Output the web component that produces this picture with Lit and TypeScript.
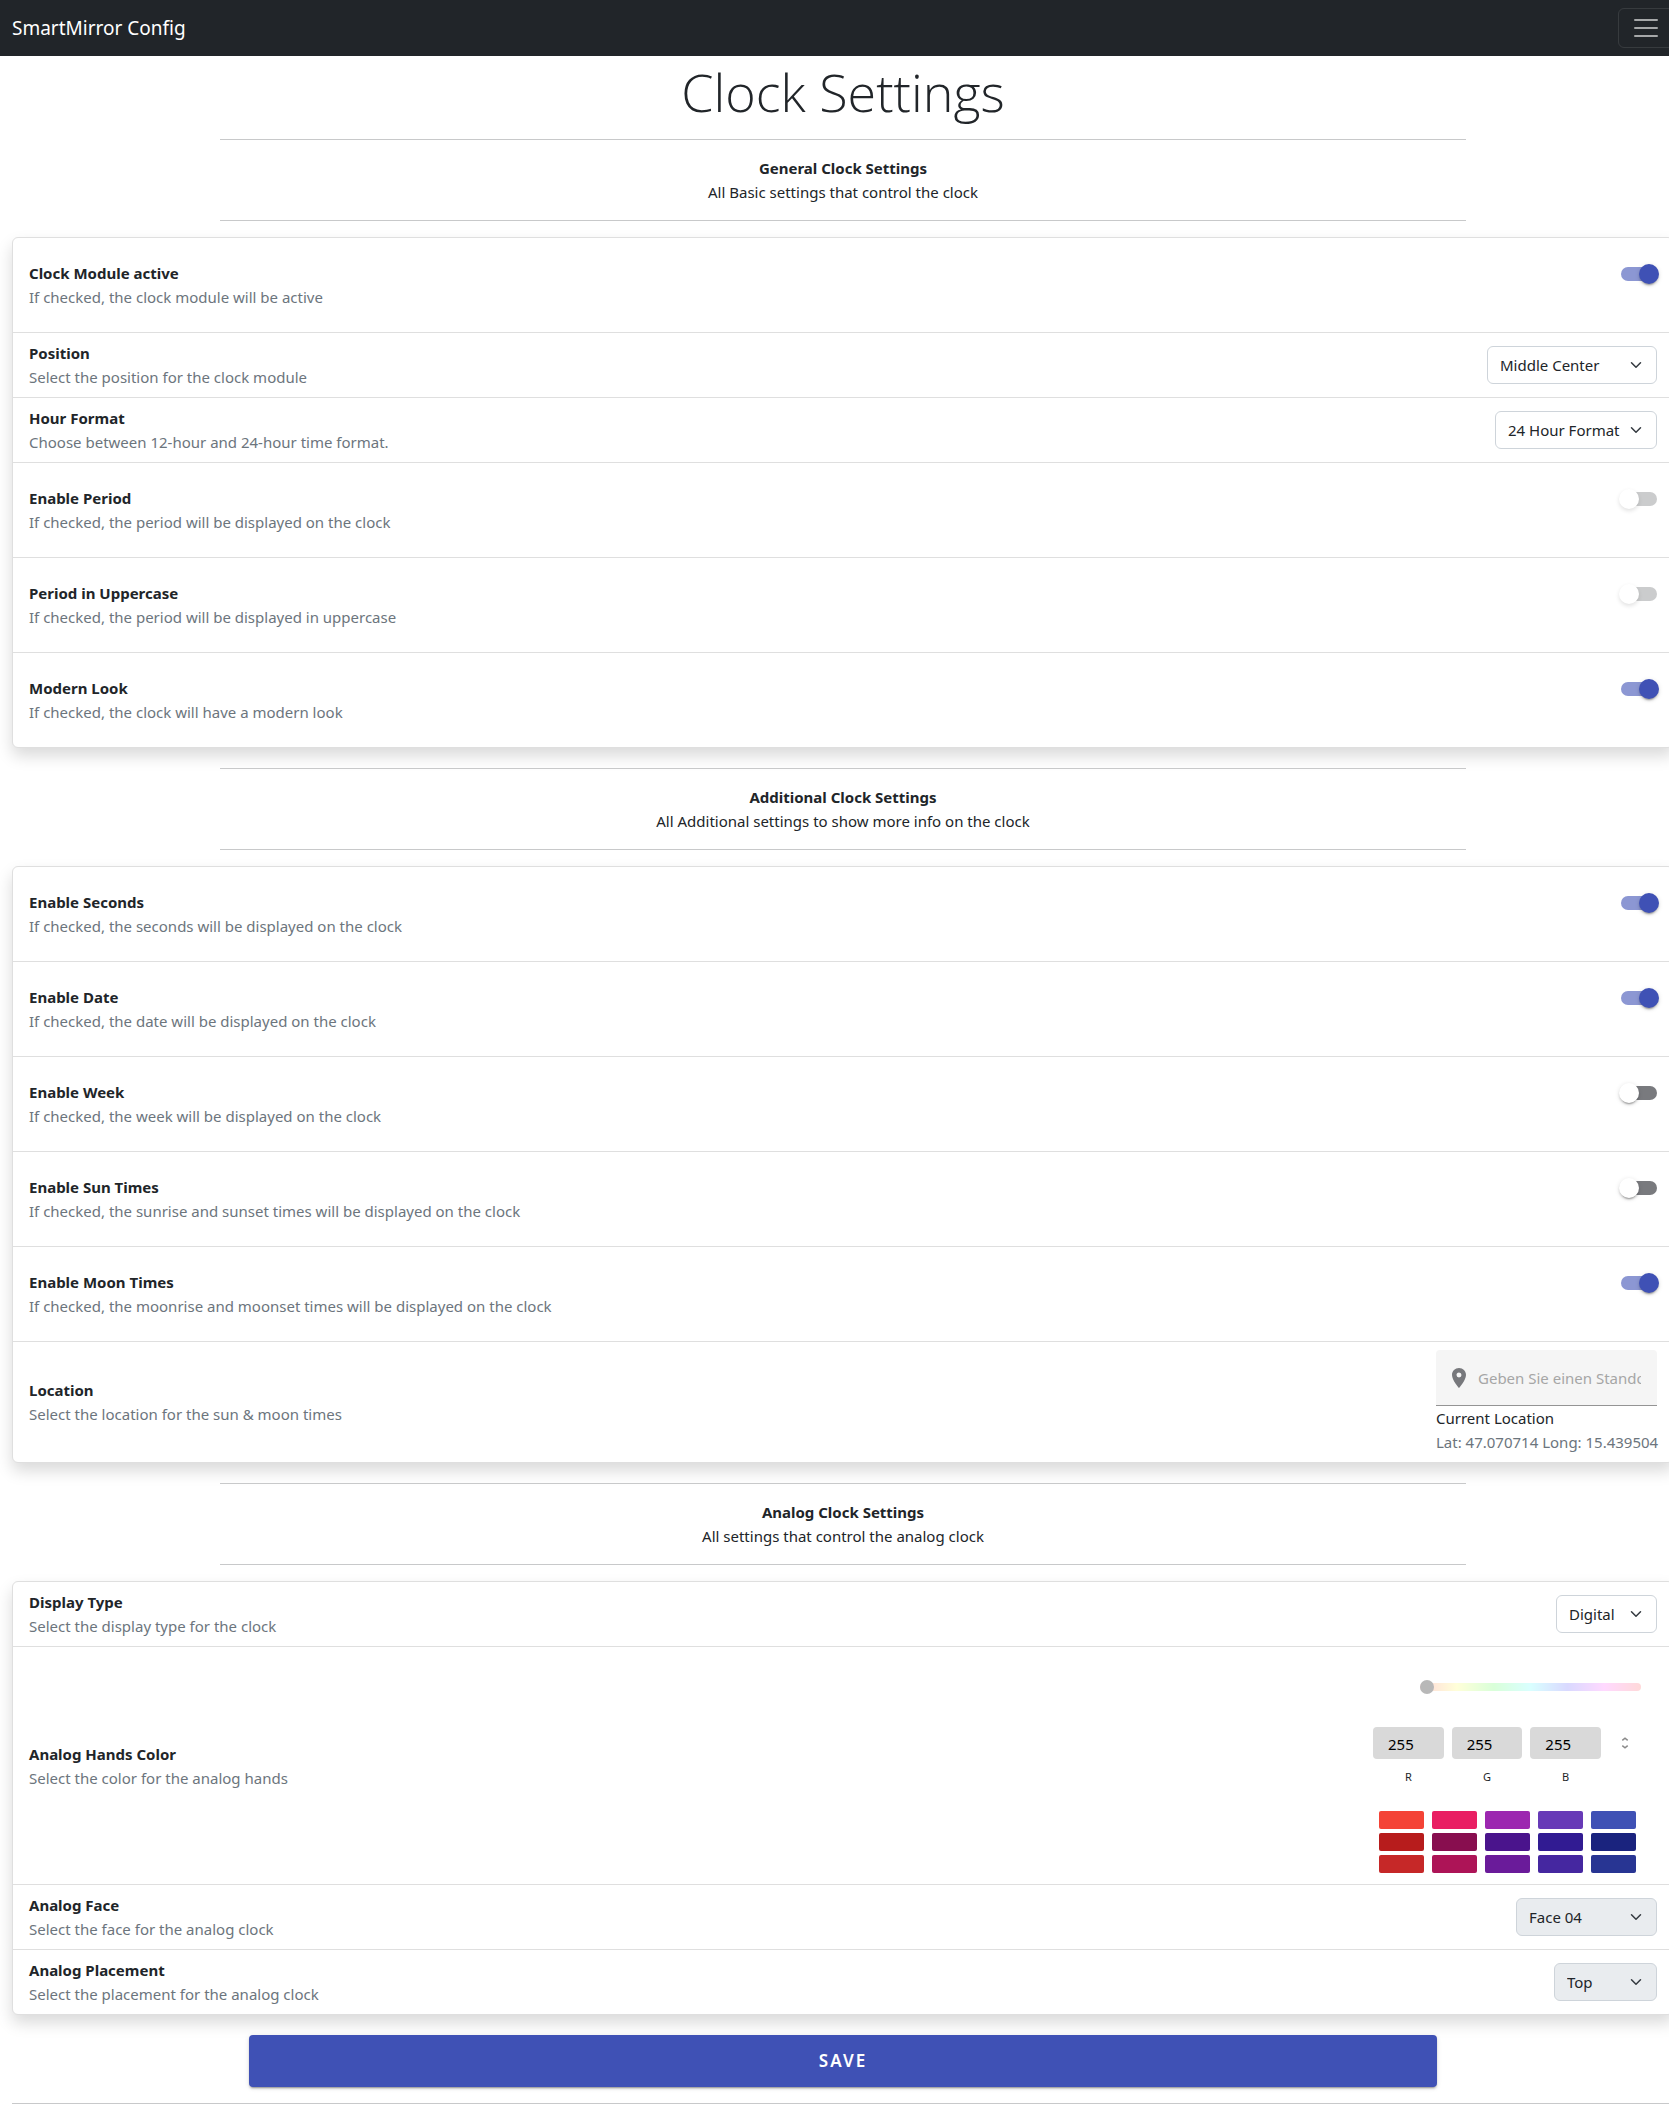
import { LitElement, html, css, nothing } from "lit";
import { customElement } from "lit/decorators.js";
import { styleMap } from "lit/directives/style-map.js";

type Control =
  | { kind: "switch"; on: boolean; disabled?: boolean }
  | { kind: "select"; options: string[]; width: number; disabled?: boolean }
  | { kind: "location" }
  | { kind: "color" };

interface Setting {
  id: string;
  title: string;
  hint: string;
  control: Control;
}

interface Section {
  title: string;
  hint: string;
  settings: Setting[];
}

const SECTIONS: Section[] = [
  {
    title: "General Clock Settings",
    hint: "All Basic settings that control the clock",
    settings: [
      { id: "active", title: "Clock Module active", hint: "If checked, the clock module will be active", control: { kind: "switch", on: true } },
      { id: "position", title: "Position", hint: "Select the position for the clock module", control: { kind: "select", options: ["Middle Center"], width: 170 } },
      { id: "hour-format", title: "Hour Format", hint: "Choose between 12-hour and 24-hour time format.", control: { kind: "select", options: ["24 Hour Format"], width: 162 } },
      { id: "period", title: "Enable Period", hint: "If checked, the period will be displayed on the clock", control: { kind: "switch", on: false, disabled: true } },
      { id: "uppercase", title: "Period in Uppercase", hint: "If checked, the period will be displayed in uppercase", control: { kind: "switch", on: false, disabled: true } },
      { id: "modern", title: "Modern Look", hint: "If checked, the clock will have a modern look", control: { kind: "switch", on: true } },
    ],
  },
  {
    title: "Additional Clock Settings",
    hint: "All Additional settings to show more info on the clock",
    settings: [
      { id: "seconds", title: "Enable Seconds", hint: "If checked, the seconds will be displayed on the clock", control: { kind: "switch", on: true } },
      { id: "date", title: "Enable Date", hint: "If checked, the date will be displayed on the clock", control: { kind: "switch", on: true } },
      { id: "week", title: "Enable Week", hint: "If checked, the week will be displayed on the clock", control: { kind: "switch", on: false } },
      { id: "sun", title: "Enable Sun Times", hint: "If checked, the sunrise and sunset times will be displayed on the clock", control: { kind: "switch", on: false } },
      { id: "moon", title: "Enable Moon Times", hint: "If checked, the moonrise and moonset times will be displayed on the clock", control: { kind: "switch", on: true } },
      { id: "location", title: "Location", hint: "Select the location for the sun & moon times", control: { kind: "location" } },
    ],
  },
  {
    title: "Analog Clock Settings",
    hint: "All settings that control the analog clock",
    settings: [
      { id: "display", title: "Display Type", hint: "Select the display type for the clock", control: { kind: "select", options: ["Digital"], width: 101 } },
      { id: "hands", title: "Analog Hands Color", hint: "Select the color for the analog hands", control: { kind: "color" } },
      { id: "face", title: "Analog Face", hint: "Select the face for the analog clock", control: { kind: "select", options: ["Face 04"], width: 141, disabled: true } },
      { id: "placement", title: "Analog Placement", hint: "Select the placement for the analog clock", control: { kind: "select", options: ["Top"], width: 103, disabled: true } },
    ],
  },
];

const SWATCHES = [
  "#f44336", "#e91e63", "#9c27b0", "#673ab7", "#3f51b5",
  "#b71c1c", "#880e4f", "#4a148c", "#311b92", "#1a237e",
  "#c62828", "#ad1457", "#6a1b9a", "#4527a0", "#283593",
];

@customElement("app-root")
export class AppRoot extends LitElement {
  static styles = css`
    :host {
      display: block;
      overflow: hidden;
      background: #fff;
      color: #212529;
      font: 400 15px/24px "Noto Sans", "Open Sans", sans-serif;
    }
    *, *::before, *::after { box-sizing: border-box; }
    /* The settings grid bleeds past the right edge of the window. */
    .page { width: calc(100% + 17px); }
    .navbar {
      display: flex;
      align-items: center;
      justify-content: space-between;
      height: 56px;
      padding: 0 12px;
      background: #212529;
    }
    .brand { color: #fff; font-size: 19px; line-height: 30px; text-decoration: none; }
    .toggler {
      display: grid;
      place-items: center;
      width: 56px;
      height: 40px;
      padding: 0;
      border: 1px solid rgba(255, 255, 255, 0.1);
      border-radius: 6px;
      background: none;
    }
    main { padding: 0 12px 16px; }
    h1 {
      margin: 0;
      padding-top: 4px;
      font-family: "Open Sans", "Noto Sans", sans-serif;
      font-size: 52px;
      font-weight: 300;
      line-height: 63px;
      text-align: center;
    }
    hr { margin: 16px 0; border: 0; border-top: 1px solid #c8c9ca; }
    .intro { width: 75%; margin: 20px auto 16px; text-align: center; }
    section:first-of-type .intro { margin-top: 16px; }
    .intro h2, .intro p { margin: 0; }
    .intro h2 { font-size: 15px; font-weight: 700; line-height: 24px; }
    .card {
      position: relative;
      z-index: -1;
      border: 1px solid #dfdfdf;
      border-radius: 6px;
      background: #fff;
      box-shadow: 0 8px 16px rgba(0, 0, 0, 0.15);
    }
    section { position: relative; z-index: 0; }
    .row {
      display: flex;
      align-items: center;
      justify-content: space-between;
      gap: 16px;
      padding: 8px 16px;
    }
    .row + .row { border-top: 1px solid #dfdfdf; }
    .name { display: block; font-weight: 700; }
    .hint { display: block; color: #6c757d; }

    .switch-cell { display: flex; padding: 21px 0 43px; }
    .switch {
      appearance: none;
      display: grid;
      align-content: center;
      width: 36px;
      height: 14px;
      margin: 0;
      border-radius: 7px;
      background: #797a7e;
    }
    .switch::before {
      content: "";
      width: 20px;
      height: 20px;
      border-radius: 50%;
      background: #fff;
      box-shadow: 0 3px 1px -2px rgba(0, 0, 0, 0.2), 0 2px 2px rgba(0, 0, 0, 0.14), 0 1px 5px rgba(0, 0, 0, 0.12);
      transform: translateX(-2px);
    }
    .switch:checked { background: #8c97d3; }
    .switch:checked::before { background: #3f51b5; transform: translateX(18px); }
    .switch:disabled { background: #cbcccd; }
    .switch:disabled::before { box-shadow: 0 2px 4px rgba(0, 0, 0, 0.12); }

    .select { display: grid; align-items: center; }
    .select select {
      grid-area: 1 / 1;
      appearance: none;
      width: 100%;
      height: 38px;
      padding: 0 30px 0 12px;
      border: 1px solid #ced4da;
      border-radius: 6px;
      background: #fff;
      color: #212529;
      font: inherit;
      opacity: 1;
    }
    .select select:disabled { background: #e9ecef; }
    .select svg { grid-area: 1 / 1; justify-self: end; margin-right: 13px; pointer-events: none; }

    .location { width: 221px; white-space: nowrap; }
    .field {
      display: flex;
      align-items: center;
      gap: 7px;
      height: 56px;
      padding: 0 16px 0 11px;
      border-bottom: 1px solid #949494;
      border-radius: 4px 4px 0 0;
      background: #f5f5f5;
    }
    .field svg { flex: none; fill: #77787c; }
    .field input {
      flex: 1;
      min-width: 0;
      height: 28px;
      padding: 0;
      border: 0;
      background: none;
      color: #212529;
      font: inherit;
    }
    .field input::placeholder { color: #a6a6a6; opacity: 1; }
    .place, .coords { margin: 0; }
    .coords { color: #6c757d; }

    .picker { width: 300px; padding: 25px 16px 3px; }
    .hue {
      appearance: none;
      display: block;
      width: 221px;
      height: 14px;
      margin: 0 0 33px auto;
      background: none;
    }
    .hue::-webkit-slider-runnable-track {
      height: 8px;
      border-radius: 4px;
      background: linear-gradient(to right, #ffd9d9, #ffffd9, #d9ffd9, #d9ffff, #d9d9ff, #ffd9ff, #ffd9d9);
    }
    .hue::-webkit-slider-thumb {
      appearance: none;
      width: 14px;
      height: 14px;
      margin-top: -3px;
      border-radius: 50%;
      background: #b8b8b8;
    }
    .channels { display: grid; grid-template-columns: 1fr 1fr 1fr 32px; gap: 8px; }
    .channel { display: flex; flex-direction: column; gap: 10px; align-items: center; }
    .channel input {
      width: 100%;
      height: 32px;
      padding: 2px 15px 0;
      border: 0;
      border-radius: 4px;
      background: #d9d9d9;
      color: #000;
      font: inherit;
    }
    .channel label { font-size: 11px; line-height: 16px; }
    .mode { display: grid; place-items: center; width: 32px; height: 32px; padding: 0; border: 0; background: none; }
    .swatches {
      display: grid;
      grid-template-columns: repeat(5, 45px);
      justify-content: center;
      gap: 4px 8px;
      margin-top: 26px;
    }
    .swatch { height: 18px; padding: 0; border: 0; border-radius: 2px; }

    .save {
      display: block;
      position: relative;
      width: calc(75% - 58px);
      height: 52px;
      margin: 20px auto 16px;
      border: 0;
      border-radius: 4px;
      background: #3f51b5;
      box-shadow: 0 3px 1px -2px rgba(0, 0, 0, 0.2), 0 2px 2px rgba(0, 0, 0, 0.14), 0 1px 5px rgba(0, 0, 0, 0.12);
      color: #fff;
      font: 600 17px/24px "Noto Sans", "Open Sans", sans-serif;
      letter-spacing: 2px;
    }
  `;

  private renderControl(s: Setting) {
    const c = s.control;
    switch (c.kind) {
      case "switch":
        return html`<div class="switch-cell">
          <input class="switch" type="checkbox" role="switch" id=${s.id} ?checked=${c.on} ?disabled=${c.disabled} />
        </div>`;
      case "select":
        return html`<div class="select" style=${styleMap({ width: `${c.width}px` })}>
          <select id=${s.id} ?disabled=${c.disabled}>
            ${c.options.map((o) => html`<option>${o}</option>`)}
          </select>
          <svg width="16" height="12" viewBox="0 0 16 16" aria-hidden="true">
            <path d="m2 5 6 6 6-6" fill="none" stroke="#343a40" stroke-width="2" stroke-linecap="round" stroke-linejoin="round" />
          </svg>
        </div>`;
      case "location":
        return html`<div class="location">
          <div class="field">
            <svg width="24" height="24" viewBox="0 0 24 24" aria-hidden="true">
              <path d="M12 2C8.13 2 5 5.13 5 9c0 5.25 7 13 7 13s7-7.75 7-13c0-3.87-3.13-7-7-7zm0 9.5a2.5 2.5 0 0 1 0-5 2.5 2.5 0 0 1 0 5z" />
            </svg>
            <input type="text" id=${s.id} placeholder="Geben Sie einen Standort ein" />
          </div>
          <p class="place">Current Location</p>
          <p class="coords">Lat: 47.070714 Long: 15.439504</p>
        </div>`;
      case "color":
        return html`<div class="picker">
          <input class="hue" type="range" id=${s.id} min="0" max="360" value="0" />
          <div class="channels">
            ${["R", "G", "B"].map(
              (ch) => html`<div class="channel">
                <input type="text" inputmode="numeric" id="channel-${ch}" .value=${"255"} />
                <label for="channel-${ch}">${ch}</label>
              </div>`
            )}
            <button class="mode" type="button" aria-label="Change color format">
              <svg width="8" height="12" viewBox="0 0 8 12" fill="none" stroke="#8a8a8a" stroke-width="1.5" aria-hidden="true">
                <path d="M1.3 3.4 4 1.2l2.7 2.2M1.3 8.6 4 10.8l2.7-2.2" />
              </svg>
            </button>
          </div>
          <div class="swatches">
            ${SWATCHES.map(
              (color) => html`<button class="swatch" type="button" aria-label=${color} style=${styleMap({ background: color })}></button>`
            )}
          </div>
        </div>`;
      default:
        return nothing;
    }
  }

  private renderSection(section: Section) {
    return html`<section>
      <div class="intro">
        <hr />
        <h2>${section.title}</h2>
        <p>${section.hint}</p>
        <hr />
      </div>
      <div class="card">
        ${section.settings.map(
          (s) => html`<div class="row">
            <div>
              <label class="name" for=${s.id}>${s.title}</label>
              <span class="hint">${s.hint}</span>
            </div>
            ${this.renderControl(s)}
          </div>`
        )}
      </div>
    </section>`;
  }

  render() {
    return html`<div class="page">
      <nav class="navbar">
        <a class="brand" href="#">SmartMirror Config</a>
        <button class="toggler" type="button" aria-label="Toggle navigation">
          <svg width="30" height="30" viewBox="0 0 30 30" aria-hidden="true">
            <path d="M4 7h22M4 15h22M4 23h22" stroke="#a6a8a9" stroke-width="2" stroke-linecap="round" stroke-miterlimit="10" />
          </svg>
        </button>
      </nav>
      <main>
        <h1>Clock Settings</h1>
        ${SECTIONS.map((s) => this.renderSection(s))}
        <button class="save" type="button">SAVE</button>
        <hr />
      </main>
    </div>`;
  }
}
